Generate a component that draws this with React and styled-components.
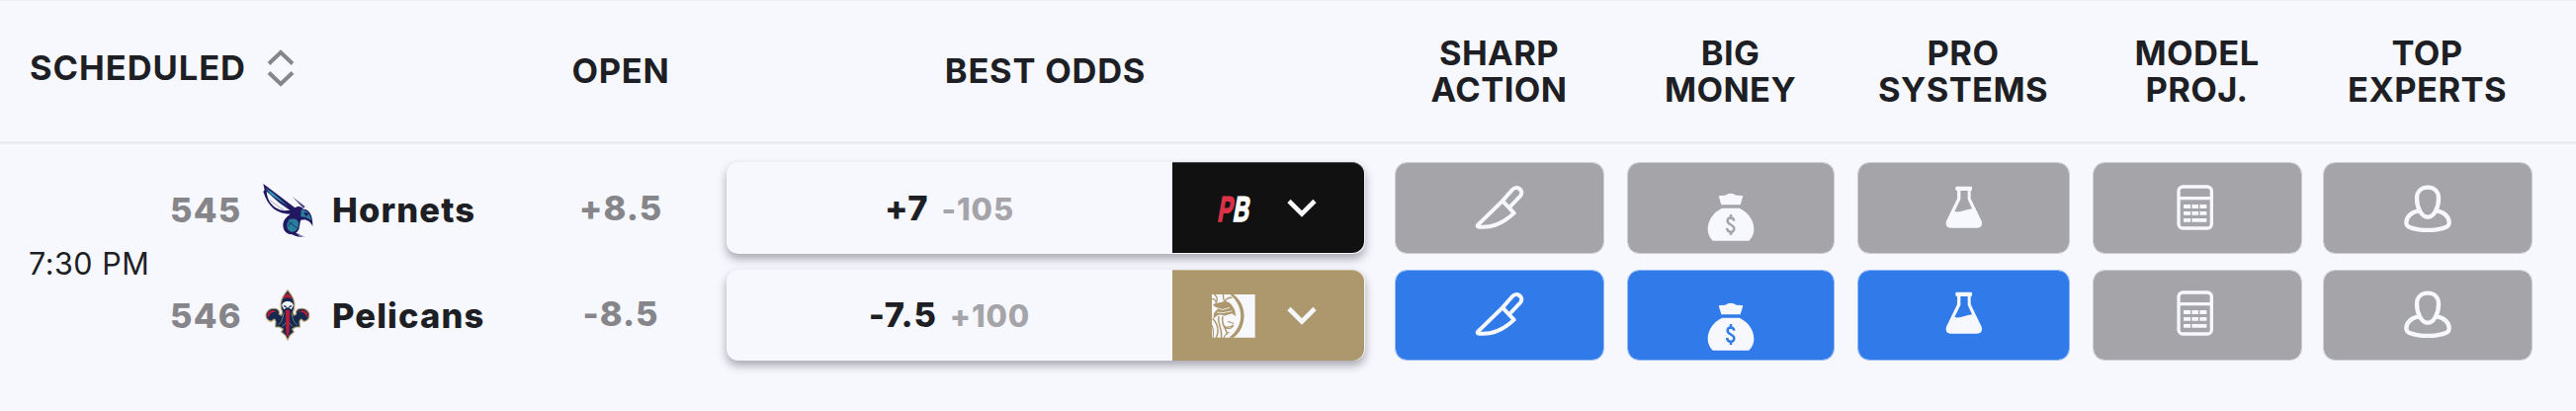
import React from "react";
import styled, { createGlobalStyle } from "styled-components";

const GlobalStyle = createGlobalStyle`
  *, *::before, *::after { box-sizing: border-box; }
  body {
    margin: 0;
    background: #f7f8fe;
    color: #1d1f24;
    font-family: Inter, "Liberation Sans", sans-serif;
  }
  svg { display: block; flex: none; }
`;

const Board = styled.main`
  width: 2606px;
  height: 416px;
  overflow: hidden;
  border-top: 1px solid #f0f1f5;
`;

const HeaderRow = styled.header`
  display: grid;
  grid-template-columns: 541px 174px 685px 1fr;
  height: 145px;
  border-bottom: 3px solid #ebecf1;
`;

const HeaderCell = styled.div`
  display: flex;
  align-items: center;
  justify-content: center;
  text-align: center;
  white-space: pre-line;
  width: ${(p) => (p.$width ? `${p.$width}px` : "auto")};
  margin-left: ${(p) => p.$gap || 0}px;
  padding-bottom: ${(p) => p.$lift || 0}px;
  font-size: 34.5px;
  line-height: 37px;
  font-weight: 700;
  letter-spacing: ${(p) => p.$tracking ?? 0.75}px;
`;

const SortHeader = styled(HeaderCell)`
  justify-content: flex-start;
  gap: 21px;
  padding: 0 0 7px 30px;
`;

const Strip = styled.div`
  display: flex;
  padding-left: ${(p) => p.$inset}px;
`;

const Body = styled.section`
  display: grid;
  grid-template-columns: 172px 369px 176px 664px 1fr;
  grid-template-rows: 93px 92px;
  row-gap: 16px;
  padding-top: 18px;
`;

const Time = styled.div`
  grid-row: 1 / 3;
  display: flex;
  align-items: center;
  padding: 4px 0 0 29px;
  font-size: 30.5px;
  letter-spacing: 0.5px;
  white-space: nowrap;
`;

const Team = styled.div`
  display: grid;
  grid-template-columns: 93px 71px auto;
  align-items: center;
  justify-content: start;
  padding-top: ${(p) => p.$drop}px;
  font-size: 34.5px;
  font-weight: 800;
  letter-spacing: 1.15px;
`;

const Rotation = styled.span`
  color: #85858a;
  font-weight: 800;
  letter-spacing: 1.2px;
`;

const Opening = styled.div`
  display: flex;
  align-items: center;
  justify-content: center;
  padding: 0 2px ${(p) => p.$lift}px 0;
  color: #85858a;
  font-size: 34.5px;
  font-weight: 800;
  letter-spacing: 1px;
`;

const OddsCell = styled.div`
  padding-left: 18px;
`;

const OddsBox = styled.div`
  display: flex;
  width: 646px;
  height: 100%;
  padding: ${(p) => (p.$last ? "0 1px 0 0" : "0 1px 1px 0")};
  border-radius: 12px;
  background: #f7f8fe;
  box-shadow: 0 5px 10px rgba(24, 24, 32, 0.36);
`;

const Price = styled.div`
  flex: 1;
  display: flex;
  align-items: baseline;
  justify-content: center;
  gap: 13px;
  padding-top: ${(p) => p.$top}px;
  line-height: 42px;
`;

const Line = styled.span`
  font-size: 34.5px;
  font-weight: 800;
  letter-spacing: 0.8px;
`;

const Juice = styled.span`
  font-size: 31px;
  font-weight: 800;
  letter-spacing: 0.9px;
  color: #a5a4a9;
`;

const Book = styled.div`
  display: flex;
  align-items: center;
  width: 194px;
  padding-left: 40px;
  gap: 32px;
  border-top: 1px solid ${(p) => p.$edge};
  border-radius: 0 12px 12px 0;
  background: ${(p) => p.$color};
`;

const Pill = styled.div`
  display: flex;
  justify-content: center;
  align-items: flex-start;
  width: ${(p) => p.$width}px;
  height: 100%;
  margin-left: ${(p) => p.$gap}px;
  padding-top: ${(p) => p.$top}px;
  padding-right: ${(p) => p.$nudge || 0}px;
  border: 1px solid ${(p) => (p.$on ? "#93b9f4" : "#cdcdd2")};
  border-radius: 12px;
  background: ${(p) => (p.$on ? "#307be9" : "#a5a4a9")};
  background-clip: padding-box;
`;

const WHITE = "#f7f8fe";

function SortIcon() {
  return (
    <svg width="28" height="38" viewBox="0 0 28 38" fill="none" stroke="#85858a" strokeWidth="4">
      <path d="M2 14.5 14 3 26 14.5M2 23.5 14 35 26 23.5" />
    </svg>
  );
}

function Chevron() {
  return (
    <svg width="30" height="20" viewBox="0 0 30 20" fill="none" stroke={WHITE} strokeWidth="4.6">
      <path d="M2 2.5 15 15.5 28 2.5" />
    </svg>
  );
}

function Knife() {
  return (
    <svg width="50" height="46" viewBox="96 81 150 138" fill="none" stroke={WHITE} strokeWidth="12" strokeLinejoin="round">
      <path d="M180 130 106 202Q101 208 110 209C150 213 182 198 215 167Z" />
      <path d="M180 130 210 96C222 82 246 96 235 114L201 150" />
    </svg>
  );
}

function MoneyBag({ hole }) {
  return (
    <svg width="48" height="50" viewBox="113 105 144 150" fill={WHITE}>
      <path d="M148 115Q150 113 168 113Q184 101 202 113Q220 113 222 115L214 142H156ZM158 152H211C240 166 255 190 255 216Q255 237 240 251H130Q115 237 115 216C115 190 130 166 158 152Z" />
      <path d="M195 191C193 178 175 178 175 191C175 203 195 202 195 214C195 228 175 228 173 213M185 171V181M185 224V234" fill="none" stroke={hole} strokeWidth="7.5" />
    </svg>
  );
}

function Flask() {
  return (
    <svg width="38" height="44" viewBox="112 83 114 132" fill={WHITE}>
      <path fillRule="evenodd" d="M146 85H190Q193 85 193 88V95Q193 98 189 98V122L222 190Q227 211 208 211H130Q110 211 115 190L148 122V98Q143 98 143 95V88Q143 85 146 85ZM158 98V124L140 161C155 166 172 156 193 153L180 124V98Z" />
    </svg>
  );
}

function Calculator() {
  return (
    <svg width="38" height="46" viewBox="126 79 114 138" fill={WHITE}>
      <rect x="132" y="85" width="100" height="126" rx="13" fill="none" stroke={WHITE} strokeWidth="10" />
      <path d="M132 115H232V125H132ZM147 139H168V151H147ZM172 139H192V151H172ZM196 139H217V151H196ZM147 160H168V171H147ZM172 160H192V171H172ZM196 160H217V171H196ZM147 181H168V192H147ZM172 181H217V192H172Z" />
    </svg>
  );
}

function Expert() {
  return (
    <svg width="50" height="50" viewBox="93 79 150 150" fill="none" stroke={WHITE} strokeWidth="13">
      <path d="M168 87C190 87 201 102 201 120C201 148 187 177 168 177C149 177 135 148 135 120C135 102 146 87 168 87Z" />
      <path d="M141 158C118 162 103 176 103 194Q103 203 111 207C142 220 194 220 225 207Q233 203 233 194C233 176 218 162 195 158" />
    </svg>
  );
}

function HornetsLogo() {
  return (
    <svg width="54" height="56" viewBox="46 12 162 168">
      <path d="M50 15 71 31 146 88C158 81 167 85 171 92C190 91 201 112 200 145C195 132 187 127 176 124L164 125C158 142 163 154 149 164C157 164 161 173 177 175C155 179 145 173 137 169C116 169 107 151 111 132C115 119 125 112 132 107C91 106 65 87 50 39L54 34Z" fill="#221861" />
      <path d="M60 38C62 70 82 91 113 97L131 95 100 74Z" fill="#f4f7fb" />
      <path d="M57 28 79 43 126 84 72 47Z" fill="#319eb5" />
      <path d="M81 57 126 92M70 65 116 98" stroke="#5a5f93" strokeWidth="1.5" fill="none" />
      <path d="M139 55 177 84 172 90Z" fill="#4b4a86" />
      <path d="M165 94C183 94 192 107 196 126L179 117 164 115ZM128 124C146 118 157 124 157 139C157 153 149 160 137 162C119 156 118 139 128 124Z" fill="#287f9e" />
      <path d="M174 103 187 106 180 113ZM125 130 154 150M123 145 138 131" fill="#1c1753" stroke="#1c1753" strokeWidth="2" />
      <path d="M151 163 158 172 172 175" fill="none" stroke="#ddd9e8" strokeWidth="2" />
    </svg>
  );
}

function PelicansLogo() {
  return (
    <svg width="50" height="56" viewBox="45 338 150 168">
      <path d="M123 343C137 361 147 376 143 397L139 410 142 420 149 416C143 395 179 392 188 414C191 428 183 437 173 438L163 431 159 438 160 455H148L137 461 142 470 130 480 123 494 116 480 104 470 109 461 98 455H86L87 438 83 431 73 438C61 435 54 425 58 414C67 392 103 395 97 416L104 420 107 410 103 397C99 376 109 361 123 343Z" fill="#132950" stroke="#b6a06d" strokeWidth="3.5" strokeLinejoin="round" />
      <path d="M110 370Q112 360 123 352Q134 360 136 370Q123 362 110 370ZM62 424C60 405 77 400 90 409C77 408 68 414 66 424ZM184 424C186 405 169 400 156 409C169 408 178 414 180 424ZM117 403H129L128 470 123 488 118 470Z" fill="#bd1939" />
      <path d="M106 391C104 372 142 372 140 391L134 402 127 396H119L112 402Z" fill="#f3f5f8" />
      <path d="M111 391 119 394M135 391 127 394" stroke="#132950" strokeWidth="4" />
      <path d="M112 412C106 430 106 442 94 448M134 412C140 430 140 442 152 448M107 454 118 442M139 454 128 442" fill="none" stroke="#8d8a77" strokeWidth="2.5" />
    </svg>
  );
}

const BookMark = styled.div`
  display: flex;
  align-items: center;
  justify-content: center;
  width: 44px;
  height: 44px;
`;

function PointsBetLogo() {
  return (
    <svg width="44" height="44" viewBox="0 0 44 44" fontFamily="Liberation Sans" fontWeight="700" fontSize="36">
      <g transform="translate(5 35) skewX(-10)">
        <text transform="scale(.62 1)" fill="#dc3248" stroke="#dc3248" strokeWidth="1.5">P</text>
        <text transform="translate(15.5 0) scale(.62 1)" fill="#fff" stroke="#fff" strokeWidth="1.5">B</text>
      </g>
    </svg>
  );
}

function LionLogo() {
  return (
    <svg width="44" height="44" viewBox="171 442 131 131" fill="none" stroke="#ac986c">
      <path fill={WHITE} stroke="none" d="M171 442H301V572H171Z" />
      <path fill="#ac986c" stroke="none" d="M226 442H236C285 480 272 548 236 572H222C264 544 274 484 226 442Z" />
      <path d="M178 442Q192 451 184 466M206 442Q203 454 210 463M171 456Q182 454 184 468M232 452Q216 450 210 464" strokeWidth="4" />
      <path fill="#ac986c" stroke="none" d="M174 474C184 464 196 470 206 463C222 460 234 474 240 490L243 508 232 499 222 502 208 507C196 498 184 506 177 514C173 502 180 492 190 486Z" />
      <path d="M180 481 204 488 224 482M186 496 206 497 232 492" stroke={WHITE} strokeWidth="2.5" />
      <path d="M173 514C184 526 196 546 184 573M192 508C186 530 204 544 199 573M204 508C196 532 214 542 217 562" strokeWidth="4.5" />
      <path d="M218 523 237 530M206 537Q222 546 236 534Q228 552 208 541M207 573Q212 560 224 556M171 534Q178 550 174 573" strokeWidth="3.5" />
    </svg>
  );
}

const METRICS = [
  { label: "SHARP\nACTION", width: 212, gap: 0, Icon: Knife, tops: [21.5, 20.5] },
  { label: "BIG\nMONEY", width: 210, gap: 23, Icon: MoneyBag, tops: [30, 32] },
  { label: "PRO\nSYSTEMS", width: 215, gap: 23, Icon: Flask, tops: [22.5, 21] },
  { label: "MODEL\nPROJ.", width: 212, gap: 23, Icon: Calculator, tops: [21.5, 20], nudge: 4 },
  { label: "TOP\nEXPERTS", width: 212, gap: 21, Icon: Expert, tops: [21.5, 20] },
];

const GAMES = [
  {
    rotation: "545", team: "Hornets", Logo: HornetsLogo, open: "+8.5", line: "+7", juice: "-105",
    book: "#111111", edge: "#4a5053", BookLogo: PointsBetLogo, active: 0, drop: 4, lift: 0, priceTop: 26,
  },
  {
    rotation: "546", team: "Pelicans", Logo: PelicansLogo, open: "-8.5", line: "-7.5", juice: "+100",
    book: "#ac986c", edge: "#c6b896", BookLogo: LionLogo, active: 3, drop: 1, lift: 3, priceTop: 25,
  },
];

function GameRow({ game, index }) {
  const { Logo, BookLogo } = game;
  return (
    <>
      <Team $drop={game.drop}>
        <Rotation>{game.rotation}</Rotation>
        <Logo />
        <span>{game.team}</span>
      </Team>
      <Opening $lift={game.lift}>{game.open}</Opening>
      <OddsCell>
        <OddsBox $last={index === 1}>
          <Price $top={game.priceTop}>
            <Line>{game.line}</Line>
            <Juice>{game.juice}</Juice>
          </Price>
          <Book $color={game.book} $edge={game.edge}>
            <BookMark><BookLogo /></BookMark>
            <Chevron />
          </Book>
        </OddsBox>
      </OddsCell>
      <Strip $inset={30}>
        {METRICS.map(({ label, width, gap, Icon, tops, nudge }, i) => (
          <Pill key={label} $width={width} $gap={gap} $top={tops[index]} $nudge={nudge} $on={i < game.active}>
            <Icon hole={i < game.active ? "#307be9" : "#a5a4a9"} />
          </Pill>
        ))}
      </Strip>
    </>
  );
}

export default function App() {
  return (
    <>
      <GlobalStyle />
      <Board>
        <HeaderRow>
          <SortHeader $tracking={0.95}>
            <span>SCHEDULED</span>
            <SortIcon />
          </SortHeader>
          <HeaderCell $lift={2}>OPEN</HeaderCell>
          <HeaderCell $lift={2}>BEST ODDS</HeaderCell>
          <Strip $inset={10.5}>
            {METRICS.map((m) => (
              <HeaderCell key={m.label} $width={m.width} $gap={m.gap} $lift={1} $tracking={0.4}>{m.label}</HeaderCell>
            ))}
          </Strip>
        </HeaderRow>
        <Body>
          <Time>7:30 PM</Time>
          {GAMES.map((game, index) => (
            <GameRow key={game.team} game={game} index={index} />
          ))}
        </Body>
      </Board>
    </>
  );
}
